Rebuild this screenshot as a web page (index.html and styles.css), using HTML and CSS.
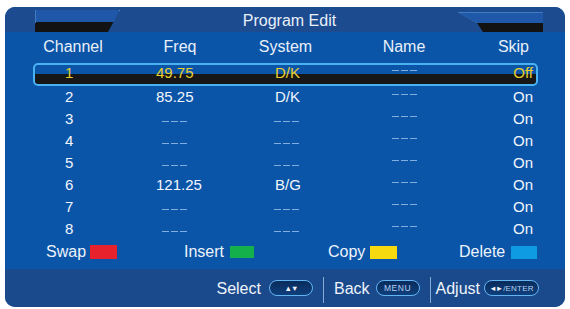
FILE: index.html
```html
<!DOCTYPE html>
<html>
<head>
<meta charset="utf-8">
<title>Program Edit</title>
<link rel="stylesheet" href="styles.css">
</head>
<body>
<div class="panel">
  <div class="titlebar">
    <div class="tab tab-left"></div>
    <div class="title">Program Edit</div>
    <div class="tab tab-right"></div>
  </div>

  <div class="colhead">
    <span>Channel</span><span>Freq</span><span>System</span><span>Name</span><span class="skip">Skip</span>
  </div>

  <div class="rows">
    <div class="row selected">
      <span>1</span><span>49.75</span><span>D/K</span><span><i class="dash dash-name"></i></span><span class="skip">Off</span>
    </div>
    <div class="row">
      <span>2</span><span>85.25</span><span>D/K</span><span><i class="dash dash-name"></i></span><span class="skip">On</span>
    </div>
    <div class="row">
      <span>3</span><span><i class="dash dash-freq"></i></span><span><i class="dash dash-sys"></i></span><span><i class="dash dash-name"></i></span><span class="skip">On</span>
    </div>
    <div class="row">
      <span>4</span><span><i class="dash dash-freq"></i></span><span><i class="dash dash-sys"></i></span><span><i class="dash dash-name"></i></span><span class="skip">On</span>
    </div>
    <div class="row">
      <span>5</span><span><i class="dash dash-freq"></i></span><span><i class="dash dash-sys"></i></span><span><i class="dash dash-name"></i></span><span class="skip">On</span>
    </div>
    <div class="row">
      <span>6</span><span>121.25</span><span>B/G</span><span><i class="dash dash-name"></i></span><span class="skip">On</span>
    </div>
    <div class="row">
      <span>7</span><span><i class="dash dash-freq"></i></span><span><i class="dash dash-sys"></i></span><span><i class="dash dash-name"></i></span><span class="skip">On</span>
    </div>
    <div class="row">
      <span>8</span><span><i class="dash dash-freq"></i></span><span><i class="dash dash-sys"></i></span><span><i class="dash dash-name"></i></span><span class="skip">On</span>
    </div>
  </div>

  <div class="actions">
    <div class="act act-swap"><span>Swap</span><i class="swatch red"></i></div>
    <div class="act act-insert"><span>Insert</span><i class="swatch green"></i></div>
    <div class="act act-copy"><span>Copy</span><i class="swatch yellow"></i></div>
    <div class="act act-delete"><span>Delete</span><i class="swatch blue"></i></div>
  </div>

  <div class="footer">
    <span class="flabel">Select</span>
    <span class="key key-select"><span class="arrows">▲▼</span></span>
    <i class="divider"></i>
    <span class="flabel lbl-back">Back</span>
    <span class="key key-menu">MENU</span>
    <i class="divider div2"></i>
    <span class="flabel lbl-adjust">Adjust</span>
    <span class="key key-enter"><span class="lr">◄►</span><span class="enter">/ENTER</span></span>
  </div>
</div>
</body>
</html>
```

FILE: styles.css
```css
html, body {
  margin: 0;
  padding: 0;
  background: #ffffff;
}

body {
  font-family: "Liberation Sans", Arial, sans-serif;
  color: #eef3fb;
}

.panel {
  margin: 7px 0 0 5px;
  width: 560px;
  height: 300px;
  border-radius: 10px;
  overflow: hidden;
  background: #0a55a8;
  display: flex;
  flex-direction: column;
}

/* ---------- title bar ---------- */
.titlebar {
  height: 25px;
  flex: none;
  background: #1c4b8f;
  display: flex;
  align-items: flex-end;
}

.tab {
  flex: none;
}

.tab-left {
  margin-left: 30px;
  width: 86px;
  height: 22px;
  clip-path: polygon(0 0, 85px 0, 73px 22px, 0 22px);
  background:
    linear-gradient(61.4deg, transparent calc(100% - 1.6px), #6aa0e0 calc(100% - 1.6px)),
    linear-gradient(to right, #3f7bc2 0, #3f7bc2 1px, transparent 1px) 0 0 / 100% 13px no-repeat,
    linear-gradient(to bottom, #1f58a8 0, #1f58a8 12.5px, #121212 12.5px, #121212 100%);
}

.tab-right {
  margin-right: 22px;
  width: 85px;
  height: 20px;
  position: relative;
  clip-path: polygon(0 0, 100% 0, 100% 100%, 25px 100%, 19px 11px);
  background:
    linear-gradient(#3f7bc2, #3f7bc2) 0 0 / 100% 1px no-repeat,
    linear-gradient(to bottom, #1f58a8 0, #1f58a8 11px, #121212 11px, #121212 100%);
}

.tab-right::before {
  content: "";
  position: absolute;
  left: 0;
  top: 0;
  width: 22px;
  height: 2px;
  background: #6aa0e0;
  transform-origin: 0 0;
  transform: rotate(30deg);
}

.title {
  flex: 1;
  align-self: stretch;
  text-align: center;
  font-size: 16px;
  line-height: 27px;
  color: #e9f0fa;
}

/* ---------- column header ---------- */
.colhead {
  display: grid;
  grid-template-columns: 76px 138px 73px 164px 1fr;
  margin: 0 27px 1px 28px;
  padding: 0 9px 0 2px;
  height: 30px;
  line-height: 30px;
  font-size: 16px;
  text-align: center;
  color: #e9f0fa;
}

.colhead .skip {
  text-align: right;
}

/* ---------- rows ---------- */
.rows {
  display: flex;
  flex-direction: column;
}

.row {
  box-sizing: border-box;
  display: grid;
  grid-template-columns: 91px 119px 117px 100px 1fr;
  margin: 0 27px 0 28px;
  padding: 0 3px 0 30px;
  height: 22px;
  line-height: 18px;
  border: 2px solid transparent;
  font-size: 15px;
  color: #f2f6fc;
  white-space: nowrap;
}

.row .skip {
  text-align: right;
}

.row.selected {
  height: 23px;
  line-height: 15px;
  border-color: #48b2f2;
  border-radius: 5px;
  background: linear-gradient(to bottom, transparent 0, transparent 9px, #171717 9px, #171717 100%);
  color: #e9cf2c;
}

.dash {
  display: inline-block;
  width: 25px;
  height: 1px;
  background-image: repeating-linear-gradient(to right, #82addf 0, #82addf 7px, transparent 7px, transparent 9px);
}

.dash-freq {
  margin-left: 6px;
  vertical-align: 2px;
}

.dash-sys {
  margin-left: -1px;
  vertical-align: 2px;
}

.dash-name {
  vertical-align: 7px;
}

/* ---------- colour actions ---------- */
.actions {
  display: grid;
  grid-template-columns: 138px 144px 131px 1fr;
  padding-left: 41px;
  height: 24px;
  font-size: 16px;
  color: #eef3fb;
}

.act {
  display: flex;
  align-items: center;
  gap: 6px;
}

.act-swap { gap: 4px; }
.act-copy { gap: 5px; }

.swatch {
  display: block;
  width: 26px;
  height: 13px;
}

.red { background: #e8222c; width: 27px; height: 14px; }
.green { background: #14b04c; width: 24px; height: 12px; }
.yellow { background: #f6d90e; width: 27px; }
.blue { background: #0e9be2; }

/* ---------- footer ---------- */
.footer {
  margin-top: auto;
  height: 38px;
  box-sizing: border-box;
  padding: 2px 26px 0 0;
  background: #1b4a8c;
  display: flex;
  justify-content: flex-end;
  align-items: center;
  font-size: 16px;
  color: #eef3fb;
}

.flabel {
  line-height: 20px;
}

.key {
  box-sizing: border-box;
  height: 16px;
  border-radius: 8px;
  border: 1.5px solid #62b4f2;
  background: linear-gradient(to bottom, #082b5b, #0f3f7c);
  display: inline-flex;
  align-items: center;
  justify-content: center;
  margin-top: -2px;
  font-size: 8.5px;
  color: #b4d0f0;
}

.key-select {
  width: 44px;
  margin-left: 8px;
}

.key-select .arrows {
  font-size: 7.5px;
  letter-spacing: -1px;
  color: #eef4fb;
}

.divider {
  display: block;
  width: 1px;
  height: 26px;
  align-self: flex-end;
  margin: 0 10px 4px 10px;
  background: #86aad6;
}

.div2 {
  margin-right: 5px;
}

.key-menu {
  width: 44px;
  margin-left: 6px;
  letter-spacing: 0.5px;
}

.key-enter {
  width: 55px;
  margin-left: 4px;
  letter-spacing: 0.2px;
}

.key-enter .lr {
  font-size: 7.5px;
  color: #f2f6fc;
  letter-spacing: -1px;
  margin-right: 1px;
}

.key-enter .enter {
  font-size: 8px;
}
```
